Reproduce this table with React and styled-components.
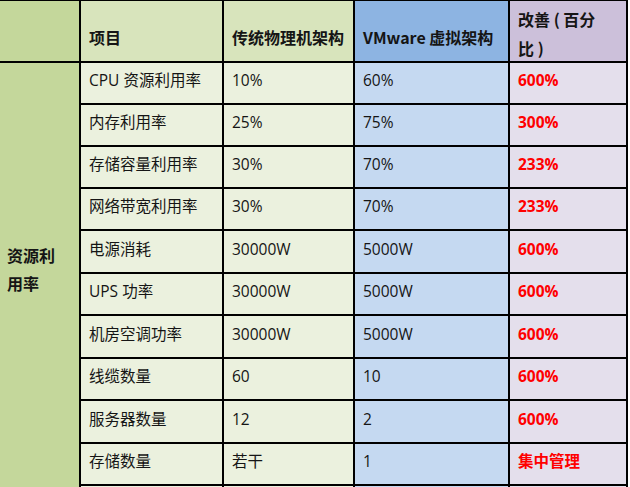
import React from 'react'
import styled, { createGlobalStyle } from 'styled-components'

const GlobalStyle = createGlobalStyle`
  html, body {
    margin: 0;
    padding: 0;
    background: #ffffff;
    overflow: hidden;
  }
  body {
    font-family: "Open Sans", "Noto Sans CJK SC", sans-serif;
  }
`;

const colors = {
  side: '#c4d79b',
  head: '#d8e4bc',
  body: '#ebf1de',
  vmHead: '#8db4e2',
  vmBody: '#c5d9f1',
  upHead: '#ccc0da',
  upBody: '#e4dfec',
};

const Sheet = styled.div`
  display: grid;
  width: fit-content;
  grid-template-columns: 79px 141px 129px 153px 116px;
  grid-template-rows: 60px 40px 40px 40px 40px 41px 40px 41px 40px 41px 40px 40px;
  gap: 2px;
  padding: 1px 2px 0 0;
  background: #000;
  height: 487px;
  box-sizing: border-box;
  overflow: hidden;
`;

const Cell = styled.div`
  background: ${({ $bg }) => $bg};
  display: flex;
  align-items: center;
  padding: 0 8px 6px 8px;
  font-family: "Open Sans", "Noto Sans CJK SC", sans-serif;
  font-size: 15.5px;
  line-height: 22px;
  color: ${({ $red }) => ($red ? '#ff0000' : '#151515')};
  font-weight: ${({ $red }) => ($red ? 700 : 400)};
  white-space: nowrap;
  overflow: hidden;
`;

const HeadCell = styled.div`
  background: ${({ $bg }) => $bg};
  display: flex;
  align-items: ${({ $wrap }) => ($wrap ? 'flex-start' : 'center')};
  padding: ${({ $wrap }) => ($wrap ? '4px 24px 0 8px' : '12px 4px 0 8px')};
  font-family: "Noto Sans CJK SC", sans-serif;
  font-size: 16px;
  line-height: 29px;
  font-weight: 700;
  color: #151515;
  white-space: ${({ $wrap }) => ($wrap ? 'normal' : 'nowrap')};
`;

const SideCell = styled.div`
  grid-column: 1;
  grid-row: 2 / span 11;
  background: ${colors.side};
  display: flex;
  align-items: center;
  padding: 0 20px 52px 7px;
  font-family: "Noto Sans CJK SC", sans-serif;
  font-size: 16px;
  line-height: 28px;
  font-weight: 700;
  color: #151515;
`;

const rows = [
  ['CPU 资源利用率', '10%', '60%', '600%'],
  ['内存利用率', '25%', '75%', '300%'],
  ['存储容量利用率', '30%', '70%', '233%'],
  ['网络带宽利用率', '30%', '70%', '233%'],
  ['电源消耗', '30000W', '5000W', '600%'],
  ['UPS 功率', '30000W', '5000W', '600%'],
  ['机房空调功率', '30000W', '5000W', '600%'],
  ['线缆数量', '60', '10', '600%'],
  ['服务器数量', '12', '2', '600%'],
  ['存储数量', '若干', '1', '集中管理'],
  ['', '', '', ''],
];

export default function App() {
  return (
    <>
      <GlobalStyle />
      <Sheet>
        <HeadCell $bg={colors.side} />
        <HeadCell $bg={colors.head}>项目</HeadCell>
        <HeadCell $bg={colors.head}>传统物理机架构</HeadCell>
        <HeadCell $bg={colors.vmHead}>VMware 虚拟架构</HeadCell>
        <HeadCell $bg={colors.upHead} $wrap>{'改善 ( 百分比\u00a0)'}</HeadCell>
        <SideCell>资源利用率</SideCell>
        {rows.map((r, i) => (
          <React.Fragment key={i}>
            <Cell $bg={colors.body}>{r[0]}</Cell>
            <Cell $bg={colors.body}>{r[1]}</Cell>
            <Cell $bg={colors.vmBody}>{r[2]}</Cell>
            <Cell $bg={colors.upBody} $red>{r[3]}</Cell>
          </React.Fragment>
        ))}
      </Sheet>
    </>
  );
}
